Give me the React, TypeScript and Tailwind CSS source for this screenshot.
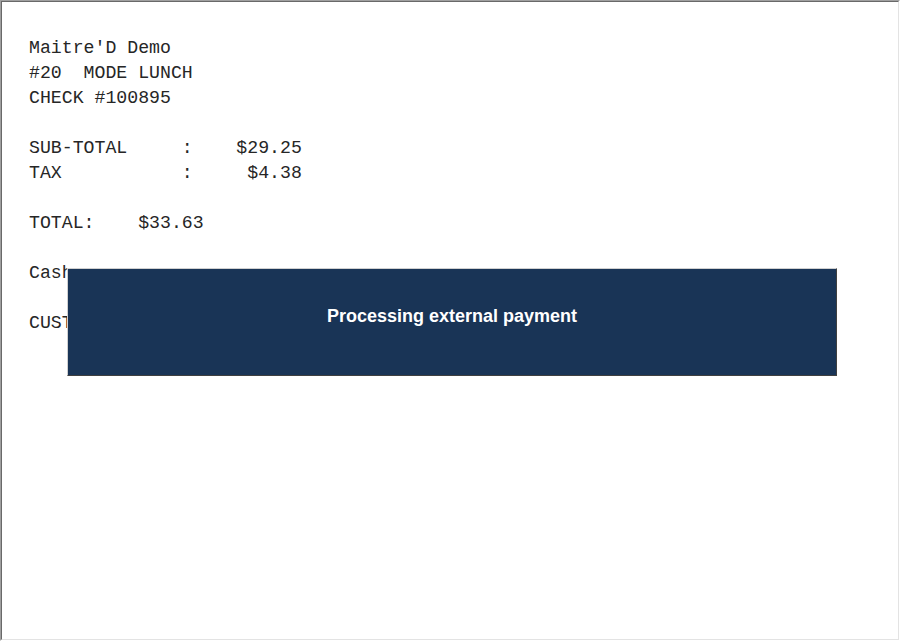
import React from "react";

const receipt = [
  "Maitre'D Demo",
  "#20  MODE LUNCH",
  "CHECK #100895",
  "",
  "SUB-TOTAL     :    $29.25",
  "TAX           :     $4.38",
  "",
  "TOTAL:    $33.63",
  "",
  "Cash          :",
  "",
  "CUSTOMER COPY",
];

export default function App() {
  return (
    <div className="w-[900px] h-[641px] bg-white border-t border-l border-r border-b border-t-[#a0a0a0] border-l-[#a0a0a0] border-r-white border-b-white">
      <div className="relative w-full h-full border-t border-l border-r border-b border-t-[#696969] border-l-[#696969] border-r-[#e3e3e3] border-b-[#e3e3e3]">
        <div
          className="pt-[34px] pl-[27px] text-[18.2px] leading-[25px] text-[#262626] whitespace-pre"
          style={{ fontFamily: '"Liberation Mono", "Courier New", monospace' }}
        >
          {receipt.map((line, i) => (
            <div key={i} className="h-[25px]">
              {line}
            </div>
          ))}
        </div>

        {/* payment overlay */}
        <div className="absolute left-[65px] top-[266px] w-[770px] h-[108px] bg-[#193456] border border-t-[#d0d0d0] border-l-[#d0d0d0] border-r-[#404040] border-b-[#404040] flex justify-center pt-[37px]">
          <span
            className="text-white font-bold text-[18px] leading-[21px]"
            style={{ fontFamily: '"Liberation Sans", Arial, sans-serif' }}
          >
            Processing external payment
          </span>
        </div>
      </div>
    </div>
  );
}
